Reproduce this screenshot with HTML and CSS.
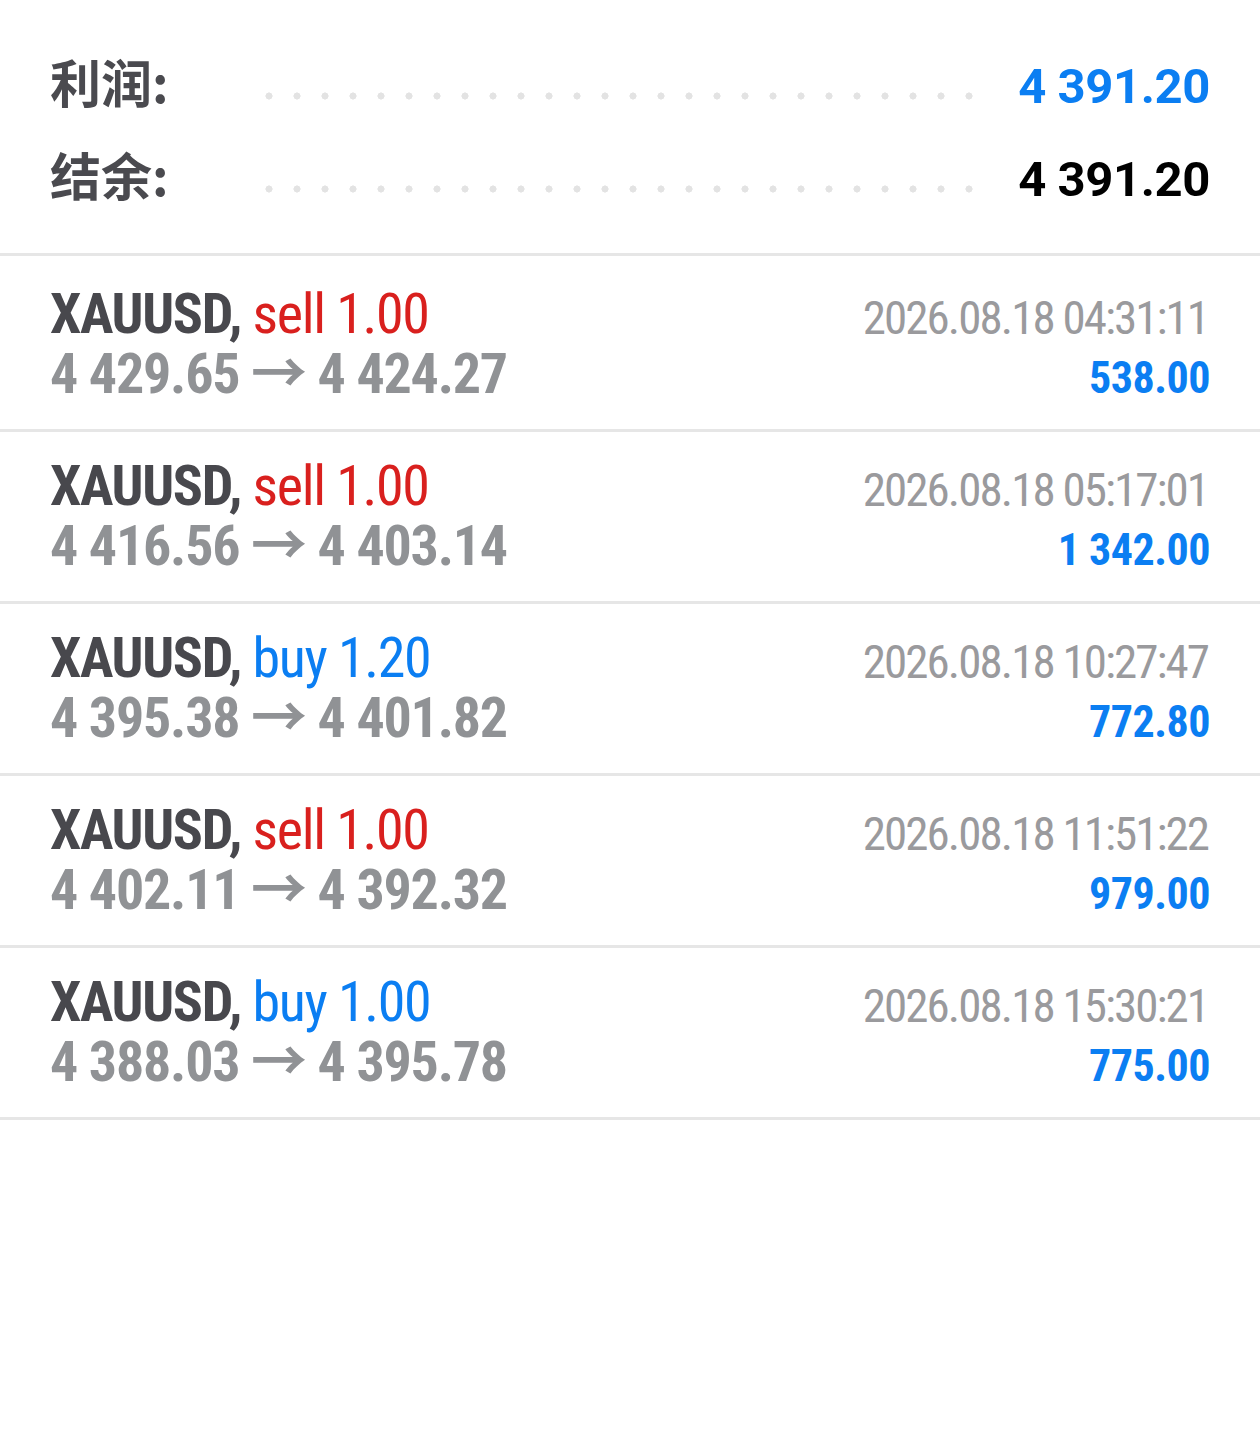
FILE: index.html
```html
<!DOCTYPE html>
<html lang="zh">
<head>
  <meta charset="UTF-8" />
  <title>交易历史</title>
  <link rel="stylesheet" href="styles.css">
</head>
<body>
  <div class="summary">
    <div class="sum-row">
      <span class="sum-label">利润:</span>
      <span class="dots"></span>
      <span class="sum-value profit">4 391.20</span>
    </div>
    <div class="sum-row">
      <span class="sum-label">结余:</span>
      <span class="dots"></span>
      <span class="sum-value">4 391.20</span>
    </div>
  </div>

  <ul class="deals">
    <li class="deal">
      <div class="deal-left">
        <div class="deal-title">XAUUSD, <span class="sell">sell 1.00</span></div>
        <div class="deal-prices">4 429.65 → 4 424.27</div>
      </div>
      <div class="deal-right">
        <div class="deal-time">2026.08.18 04:31:11</div>
        <div class="deal-profit">538.00</div>
      </div>
    </li>
    <li class="deal">
      <div class="deal-left">
        <div class="deal-title">XAUUSD, <span class="sell">sell 1.00</span></div>
        <div class="deal-prices">4 416.56 → 4 403.14</div>
      </div>
      <div class="deal-right">
        <div class="deal-time">2026.08.18 05:17:01</div>
        <div class="deal-profit">1 342.00</div>
      </div>
    </li>
    <li class="deal">
      <div class="deal-left">
        <div class="deal-title">XAUUSD, <span class="buy">buy 1.20</span></div>
        <div class="deal-prices">4 395.38 → 4 401.82</div>
      </div>
      <div class="deal-right">
        <div class="deal-time">2026.08.18 10:27:47</div>
        <div class="deal-profit">772.80</div>
      </div>
    </li>
    <li class="deal">
      <div class="deal-left">
        <div class="deal-title">XAUUSD, <span class="sell">sell 1.00</span></div>
        <div class="deal-prices">4 402.11 → 4 392.32</div>
      </div>
      <div class="deal-right">
        <div class="deal-time">2026.08.18 11:51:22</div>
        <div class="deal-profit">979.00</div>
      </div>
    </li>
    <li class="deal">
      <div class="deal-left">
        <div class="deal-title">XAUUSD, <span class="buy">buy 1.00</span></div>
        <div class="deal-prices">4 388.03 → 4 395.78</div>
      </div>
      <div class="deal-right">
        <div class="deal-time">2026.08.18 15:30:21</div>
        <div class="deal-profit">775.00</div>
      </div>
    </li>
  </ul>
</body>
</html>
```

FILE: styles.css
```css
body {
  margin: 0;
  background: #fff;
  font-family: Roboto, "Noto Sans CJK SC", sans-serif;
}
.summary {
  padding: 35px 50px 32px;
  border-bottom: 3px solid #e6e6e6;
}
.sum-row {
  display: flex;
  align-items: baseline;
  height: 93px;
  line-height: 93px;
}
.sum-label {
  width: 215px;
  flex: none;
  font-family: "Noto Sans CJK SC", sans-serif;
  font-size: 51px;
  font-weight: 700;
  color: #4a4a4f;
}
.dots {
  align-self: flex-start;
  flex: 1;
  height: 8px;
  margin: 57px 44px 0 0;
  background-image: radial-gradient(circle, #e3e3e3 3.3px, transparent 3.8px);
  background-size: 28px 8px;
  background-repeat: repeat-x;
  background-position: -10px 0;
}
.sum-value {
  font-size: 49px;
  font-weight: 700;
  letter-spacing: -0.4px;
  color: #000;
}
.sum-value.profit {
  color: #0b7ef2;
}
.deals {
  list-style: none;
  margin: 0;
  padding: 0;
  font-stretch: condensed;
}
.deal {
  display: flex;
  justify-content: space-between;
  height: 169px;
  padding: 0 50px;
  border-bottom: 3px solid #e6e6e6;
}
.deal:first-child {
  height: 173px;
}
.deal-left {
  padding-top: 24px;
}
.deal-right {
  padding-top: 28px;
  text-align: right;
}
.deal:first-child .deal-left {
  padding-top: 28px;
}
.deal:first-child .deal-right {
  padding-top: 32px;
}
.deal-title {
  font-size: 56px;
  line-height: 60px;
  font-weight: 700;
  letter-spacing: -1.35px;
  color: #48484d;
}
.deal-title span {
  font-weight: 400;
}
.sell {
  color: #d9201e;
}
.buy {
  color: #0b7ef2;
}
.deal-prices {
  font-size: 56px;
  line-height: 60px;
  font-weight: 700;
  letter-spacing: -1.2px;
  color: #909295;
}
.deal-time {
  font-size: 47px;
  line-height: 60px;
  letter-spacing: -1.95px;
  margin-right: 1.95px;
  color: #9a9a9d;
}
.deal-profit {
  font-size: 44px;
  line-height: 60px;
  font-weight: 700;
  letter-spacing: -0.5px;
  color: #0b7ef2;
}
```
